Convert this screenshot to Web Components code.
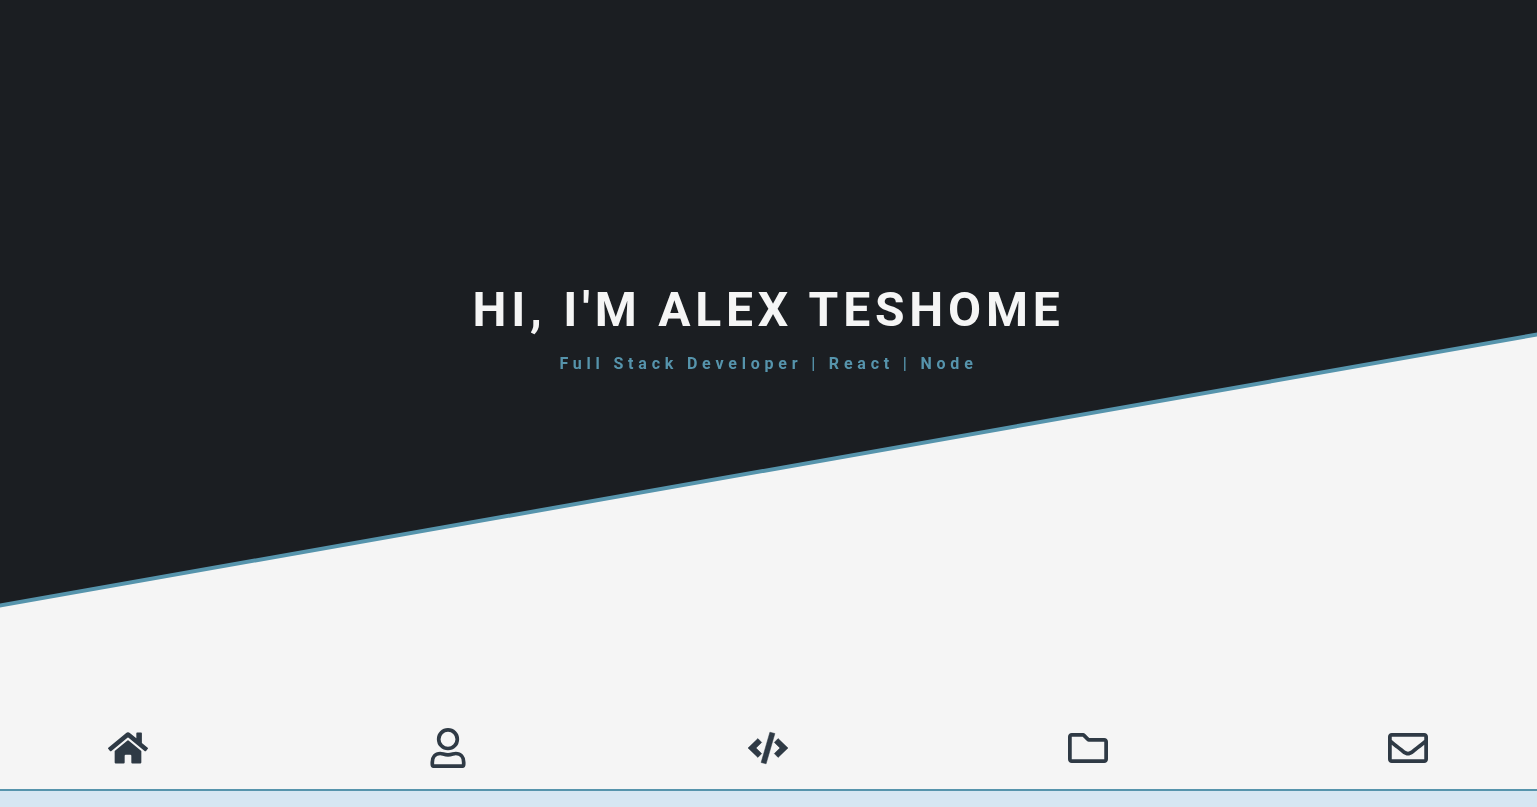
<!DOCTYPE html>
<html lang="en">
<head>
<meta charset="utf-8">
<meta name="viewport" content="width=device-width, initial-scale=1">
<title>Alex Teshome</title>
<style>
  :root { --dark: #1b1e22; --light: #f5f5f5; --accent: #5694ac; --icon: #2f3a45; --section: #d6e6f2; }
  body { margin: 0; background: var(--light); font-family: Roboto, sans-serif; }
</style>
</head>
<body>
<portfolio-page></portfolio-page>

<template id="page-template">
  <style>
    :host { display: grid; grid-template-rows: 1fr auto 16px; min-height: 100vh; }
    .about { background: var(--section); }
  </style>
  <hero-banner>
    <span slot="title">HI, I'M ALEX TESHOME</span>
    <span slot="subtitle">Full Stack Developer | React | Node</span>
  </hero-banner>
  <site-nav>
    <nav-link href="#home" label="Home" icon="home"></nav-link>
    <nav-link href="#about" label="About" icon="user"></nav-link>
    <nav-link href="#skills" label="Skills" icon="code"></nav-link>
    <nav-link href="#projects" label="Projects" icon="folder"></nav-link>
    <nav-link href="#contact" label="Contact" icon="envelope"></nav-link>
  </site-nav>
  <section class="about" aria-label="About"></section>
</template>

<template id="hero-template">
  <style>
    :host { display: block; position: relative; overflow: hidden; background: var(--light); }
    .slope {
      position: absolute; top: -50%; right: 0; bottom: 33.333%; left: 0;
      display: flex; box-sizing: border-box; padding-bottom: 4px;
      background: var(--accent);
      transform: skewY(-10deg);
    }
    .slope::before { content: ""; flex: 1; background: var(--dark); }
    header { position: relative; padding: 280px 16px 0; text-align: center; will-change: transform; }
    h1 { margin: 0; color: var(--light); font-size: 48px; line-height: 60px; font-weight: 700; letter-spacing: 0.1em; }
    p { margin: 12px 0 0; color: var(--accent); font-size: 16px; line-height: 24px; font-weight: 700; letter-spacing: 0.3em; }
  </style>
  <div class="slope"></div>
  <header>
    <h1><slot name="title"></slot></h1>
    <p><slot name="subtitle"></slot></p>
  </header>
</template>

<template id="nav-template">
  <style>
    :host { display: block; background: var(--light); border-bottom: 2px solid var(--accent); }
    nav { display: flex; justify-content: space-between; padding: 21px 109px 21px 108px; }
    @media (max-width: 600px) { nav { padding: 21px 24px; } }
  </style>
  <nav aria-label="Main"><slot></slot></nav>
</template>

<script>
  const stamp = id => document.getElementById(id).content.cloneNode(true);

  const icons = {
    home: '<svg viewBox="0 -32 576 576"><path d="M280.370 148.260L96 300.110V464a16 16 0 0 0 16 16l112.060-.290a16 16 0 0 0 15.920-16V368a16 16 0 0 1 16-16h64a16 16 0 0 1 16 16v95.640a16 16 0 0 0 16 16.050L464 480a16 16 0 0 0 16-16V300L295.670 148.260a12.190 12.190 0 0 0-15.300 0zM571.600 251.470L488 182.560V44.050a12 12 0 0 0-12-12h-56a12 12 0 0 0-12 12v72.610L318.470 43a48 48 0 0 0-61 0L4.340 251.470a12 12 0 0 0-1.600 16.900l25.500 31A12 12 0 0 0 45.150 301l235.220-193.740a12.190 12.190 0 0 1 15.300 0L530.900 301a12 12 0 0 0 16.900-1.600l25.500-31a12 12 0 0 0-1.700-16.930z"/></svg>',
    user: '<svg viewBox="0 0 40 40"><g fill="none" stroke="currentColor" stroke-width="3.7"><circle cx="20" cy="11.2" r="9.3"/><path d="M12.2 25.5c2.400 0 4 1.400 7.800 1.400s5.400-1.400 7.800-1.400c5 0 7.900 3.700 7.900 8.700v2a2 2 0 0 1-2 2H6.300a2 2 0 0 1-2-2v-2c0-5 2.900-8.700 7.900-8.700z"/></g></svg>',
    code: '<svg viewBox="0 0 40 40"><path d="M0 20L9.900 10.600 13.700 14.400 8 20 13.700 25.600 9.900 29.400ZM40 20L30.100 10.600 26.300 14.400 32 20 26.300 25.600 30.100 29.400ZM21.900 4.200L26.900 5.500 18.100 35.800 13.100 34.500Z" stroke="currentColor" stroke-width=".5" stroke-linejoin="round"/></svg>',
    folder: '<svg viewBox="0 0 512 512"><path d="M464 128H272l-54.630-54.630c-6-6-14.140-9.370-22.630-9.370H48C21.490 64 0 85.490 0 112v288c0 26.510 21.490 48 48 48h416c26.510 0 48-21.490 48-48V176c0-26.510-21.490-48-48-48zm0 272H48V112h140.120l54.630 54.630c6 6 14.140 9.370 22.630 9.370H464v224z"/></svg>',
    envelope: '<svg viewBox="0 0 512 512"><path d="M464 64H48C21.490 64 0 85.490 0 112v288c0 26.510 21.490 48 48 48h416c26.510 0 48-21.490 48-48V112c0-26.510-21.490-48-48-48zm0 48v40.805c-22.422 18.259-58.168 46.651-134.587 106.490-16.841 13.247-50.201 45.072-73.413 44.701-23.208.375-56.579-31.459-73.413-44.701C106.180 199.465 70.425 171.067 48 152.805V112h416zM48 400V214.398c22.914 18.251 55.409 43.862 104.938 82.646 21.857 17.205 60.134 55.186 103.062 54.955 42.717.231 80.509-37.199 103.053-54.947 49.528-38.783 82.032-64.401 104.947-82.653V400H48z"/></svg>'
  };

  class NavLink extends HTMLElement {
    constructor() {
      super();
      this.attachShadow({ mode: 'open' });
    }
    connectedCallback() {
      this.shadowRoot.innerHTML = `
        <style>
          :host { display: block; }
          a { display: block; color: var(--icon); }
          svg { display: block; width: 40px; height: 40px; fill: currentColor; }
        </style>
        <a href="${this.getAttribute('href')}" aria-label="${this.getAttribute('label')}">${icons[this.getAttribute('icon')]}</a>`;
    }
  }

  class HeroBanner extends HTMLElement {
    constructor() {
      super();
      this.attachShadow({ mode: 'open' }).append(stamp('hero-template'));
    }
  }

  class SiteNav extends HTMLElement {
    constructor() {
      super();
      this.attachShadow({ mode: 'open' }).append(stamp('nav-template'));
    }
  }

  class PortfolioPage extends HTMLElement {
    constructor() {
      super();
      this.attachShadow({ mode: 'open' }).append(stamp('page-template'));
    }
  }

  customElements.define('nav-link', NavLink);
  customElements.define('hero-banner', HeroBanner);
  customElements.define('site-nav', SiteNav);
  customElements.define('portfolio-page', PortfolioPage);
</script>
</body>
</html>
